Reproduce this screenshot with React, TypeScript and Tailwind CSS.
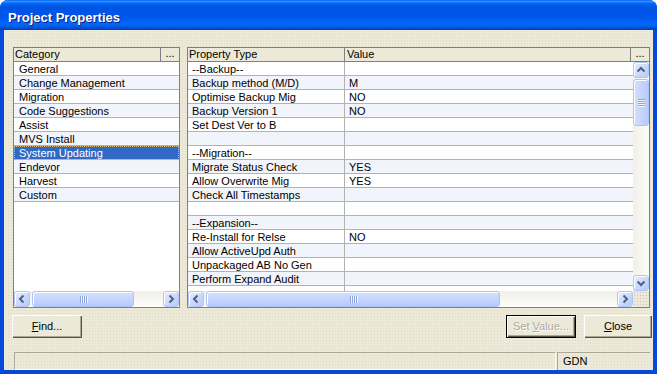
import React from "react";

type Dir = "l" | "r" | "u" | "d";

const chevrons: Record<Dir, string> = {
  l: "M9.5 4.5L6 8l3.5 3.5",
  r: "M6.5 4.5L10 8l-3.5 3.5",
  u: "M4.5 9.5L8 6l3.5 3.5",
  d: "M4.5 6.5L8 10l3.5-3.5",
};

function ScrollBtn({ dir }: { dir: Dir }) {
  return (
    <div className="w-[16px] h-[16px] shrink-0 rounded-[3px] border border-[#b1c5f5] bg-[linear-gradient(135deg,#e6edfe_0%,#c9d8fd_55%,#b9cbfa_100%)] shadow-[inset_1px_1px_0_#ffffff] flex items-center justify-center">
      <svg width="14" height="14" viewBox="1 1 14 14">
        <path d={chevrons[dir]} fill="none" stroke="#4d6185" strokeWidth="2" />
      </svg>
    </div>
  );
}

function GripH() {
  return (
    <div className="flex gap-[1px]">
      {[0, 1, 2, 3].map((i) => (
        <div key={i} className="w-[1px] h-[7px] bg-[#8ea4de] shadow-[1px_0_0_#f1f5ff]" />
      ))}
    </div>
  );
}

function GripV() {
  return (
    <div className="flex flex-col gap-[1px]">
      {[0, 1, 2, 3].map((i) => (
        <div key={i} className="w-[7px] h-[1px] bg-[#8ea4de] shadow-[0_1px_0_#f1f5ff]" />
      ))}
    </div>
  );
}

function HScroll({ thumb }: { thumb: number }) {
  return (
    <div className="h-[16px] flex bg-[linear-gradient(to_bottom,#f1efe8,#fdfdfa)]">
      <ScrollBtn dir="l" />
      <div className="flex-1 flex pl-[2px]">
        <div
          className="h-[16px] rounded-[3px] border border-[#aec2f4] bg-[linear-gradient(to_bottom,#d3dffd,#c2d3fc_60%,#b8cbfa)] shadow-[inset_1px_1px_0_#ffffff] flex items-center justify-center"
          style={{ width: thumb }}
        >
          <GripH />
        </div>
      </div>
      <ScrollBtn dir="r" />
    </div>
  );
}

function VScroll() {
  return (
    <div className="w-[16px] flex flex-col bg-[linear-gradient(to_right,#f1efe8,#fdfdfa)]">
      <ScrollBtn dir="u" />
      <div className="flex-1 flex flex-col pt-[1px]">
        <div className="w-[16px] h-[47px] rounded-[3px] border border-[#aec2f4] bg-[linear-gradient(to_right,#d3dffd,#c2d3fc_60%,#b8cbfa)] shadow-[inset_1px_1px_0_#ffffff] flex items-center justify-center">
          <GripV />
        </div>
      </div>
      <ScrollBtn dir="d" />
    </div>
  );
}

const categories = [
  "General",
  "Change Management",
  "Migration",
  "Code Suggestions",
  "Assist",
  "MVS Install",
  "System Updating",
  "Endevor",
  "Harvest",
  "Custom",
];

const properties: [string, string][] = [
  ["--Backup--", ""],
  ["Backup method (M/D)", "M"],
  ["Optimise Backup Mig", "NO"],
  ["Backup Version 1", "NO"],
  ["Set Dest Ver to B", ""],
  ["", ""],
  ["--Migration--", ""],
  ["Migrate Status Check", "YES"],
  ["Allow Overwrite Mig", "YES"],
  ["Check All Timestamps", ""],
  ["", ""],
  ["--Expansion--", ""],
  ["Re-Install for Relse", "NO"],
  ["Allow ActiveUpd Auth", ""],
  ["Unpackaged AB No Gen", ""],
  ["Perform Expand Audit", ""],
  ["", ""],
];

export default function App() {
  return (
    <div className="w-[657px] h-[374px] bg-white">
      <div className="w-full h-full rounded-t-[8px] overflow-hidden flex flex-col bg-[#0748dc] font-['Liberation_Sans',Arial,sans-serif] text-[11px] text-black">
        {/* Title bar */}
        <div className="h-[30px] shrink-0 flex items-center pl-[8px] pt-[4px] bg-[linear-gradient(to_bottom,#0058ee_0%,#3593ff_4%,#288eff_6%,#127dff_8%,#036ffc_10%,#0262ee_14%,#0057e5_20%,#0054e3_24%,#0055eb_56%,#005bf5_66%,#026afe_76%,#0062ef_86%,#0052d6_92%,#0046c4_96%,#0040b8_100%)]">
          <span className="text-white font-bold text-[13px] leading-none [text-shadow:1px_1px_0_#0a1c7a]">
            Project Properties
          </span>
        </div>

        {/* Client area */}
        <div className="flex-1 mx-[4px] mb-[4px] flex flex-col pt-[17px] pl-[9px] pr-[3px] bg-[#ece9d8] bg-[radial-gradient(circle,#dedac8_0.6px,transparent_0.9px)] bg-size-[3px_3px]">
          <div className="flex gap-[7px] h-[261px]">
            {/* Category panel */}
            <div className="w-[167px] h-[261px] border border-[#7f7f7f] flex flex-col">
              <div className="h-[14px] flex border-b border-[#808080] bg-[#ece9d8]">
                <div className="flex-1 border-r border-[#808080] pl-[1px] leading-[13px]">Category</div>
                <div className="w-[18px] leading-[11px] text-center">...</div>
              </div>
              <div className="h-[229px] bg-white flex flex-col">
                {categories.map((c, i) => (
                  <div
                    key={c}
                    className={
                      c === "System Updating"
                        ? "h-[14px] border-b border-[#b2b2b2] pl-[5px] leading-[14px] bg-[#316ac5] text-white outline-1 outline-dotted outline-[#d9b878] -outline-offset-1"
                        : i % 2 === 0
                        ? "h-[14px] border-b border-[#b2b2b2] pl-[5px] leading-[14px] bg-white"
                        : "h-[14px] border-b border-[#b2b2b2] pl-[5px] leading-[14px] bg-[#f2f4fb]"
                    }
                  >
                    {c}
                  </div>
                ))}
              </div>
              <HScroll thumb={102} />
            </div>

            {/* Property panel */}
            <div className="w-[463px] h-[261px] border border-[#7f7f7f] flex flex-col">
              <div className="h-[14px] flex border-b border-[#808080] bg-[#ece9d8]">
                <div className="w-[157px] border-r border-[#808080] pl-[1px] leading-[13px]">Property Type</div>
                <div className="w-[286px] border-r border-[#808080] pl-[2px] leading-[13px]">Value</div>
                <div className="flex-1 leading-[11px] text-center">...</div>
              </div>
              <div className="h-[229px] flex">
                <div className="flex-1 bg-white overflow-hidden flex flex-col">
                  {properties.map(([k, v], i) => (
                    <div
                      key={i}
                      className={
                        i % 2 === 0
                          ? "h-[14px] shrink-0 flex border-b border-[#b2b2b2] bg-white leading-[14px]"
                          : "h-[14px] shrink-0 flex border-b border-[#b2b2b2] bg-[#f2f4fb] leading-[14px]"
                      }
                    >
                      <div className="w-[157px] border-r border-[#b2b2b2] pl-[4px] whitespace-nowrap">{k}</div>
                      <div className="flex-1 pl-[4px]">{v}</div>
                    </div>
                  ))}
                </div>
                <VScroll />
              </div>
              <div className="h-[16px] flex">
                <div className="flex-1">
                  <HScroll thumb={294} />
                </div>
                <div className="w-[16px] h-[16px] bg-[#ece9d8] bg-[radial-gradient(circle,#c9c5b3_0.7px,transparent_1px)] bg-size-[3px_3px]" />
              </div>
            </div>
          </div>

          {/* Buttons */}
          <div className="mt-[7px] h-[23px] flex">
            <button className="w-[70px] h-[23px] -ml-[1px] bg-[#ece9d8] shadow-[inset_1px_1px_0_#ffffff,inset_-1px_-1px_0_#555248,inset_-2px_-2px_0_#aca899] text-[11px] text-black">
              <span className="underline">F</span>ind...
            </button>
            <div className="flex-1" />
            <button className="w-[70px] h-[23px] border border-black bg-[#ece9d8] shadow-[inset_1px_1px_0_#ffffff,inset_-1px_-1px_0_#555248,inset_-2px_-2px_0_#aca899] text-[11px] text-[#aca899] [text-shadow:1px_1px_0_#ffffff]">
              Set <span className="underline">V</span>alue...
            </button>
            <button className="w-[68px] h-[23px] ml-[8px] -mr-[2px] bg-[#ece9d8] shadow-[inset_1px_1px_0_#ffffff,inset_-1px_-1px_0_#555248,inset_-2px_-2px_0_#aca899] text-[11px] text-black">
              <span className="underline">C</span>lose
            </button>
          </div>

          {/* Status bar */}
          <div className="mt-[14px] h-[18px] ml-[1px] flex gap-[1px]">
            <div className="flex-1 border-t border-l border-[#aca899] border-b border-r border-b-white border-r-white" />
            <div className="w-[93px] border-t border-l border-[#aca899] pl-[5px] leading-[16px]">GDN</div>
          </div>
        </div>
      </div>
    </div>
  );
}
